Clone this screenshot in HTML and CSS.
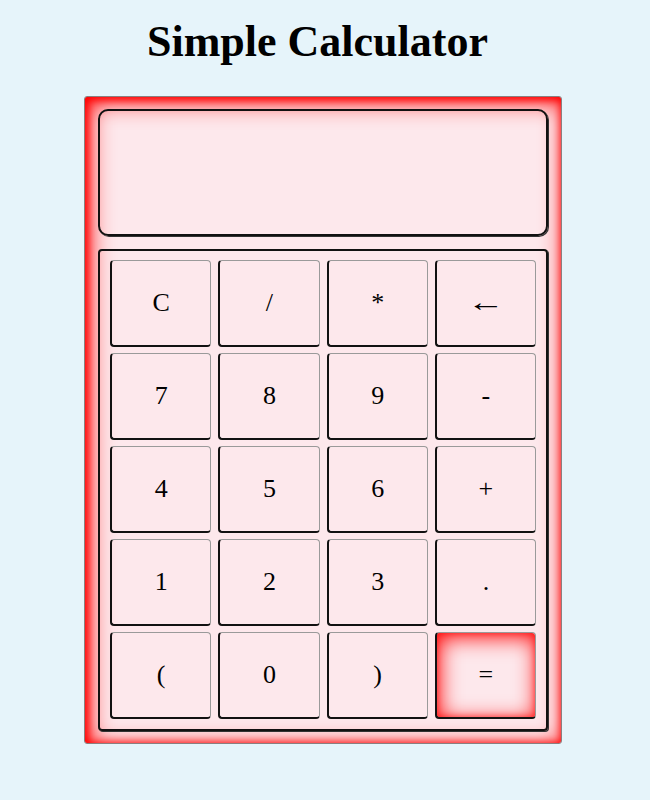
FILE: index.html
```html
<!DOCTYPE html>
<html>
<head>
<meta charset="utf-8">
<title>Simple Calculator</title>
<link rel="stylesheet" href="styles.css">
</head>
<body>
<h1 class="title">Simple Calculator</h1>
<div class="calculator">
  <div class="display"></div>
  <div class="keypad">
    <button class="key">C</button>
    <button class="key">/</button>
    <button class="key">*</button>
    <button class="key"><span class="arrow">&larr;</span></button>
    <button class="key">7</button>
    <button class="key">8</button>
    <button class="key">9</button>
    <button class="key">-</button>
    <button class="key">4</button>
    <button class="key">5</button>
    <button class="key">6</button>
    <button class="key">+</button>
    <button class="key">1</button>
    <button class="key">2</button>
    <button class="key">3</button>
    <button class="key">.</button>
    <button class="key">(</button>
    <button class="key">0</button>
    <button class="key">)</button>
    <button class="key key-equals">=</button>
  </div>
</div>
</body>
</html>
```
FILE: styles.css
```css
html, body {
  background: #e6f4fa;
}
body {
  margin: 8px;
  font-family: "Liberation Serif", "Times New Roman", serif;
  color: #000;
}
.title {
  font-size: 44px;
  font-weight: bold;
  text-align: center;
  margin: 9px 0 29px;
  padding-right: 15px;
  line-height: 50px;
}
.calculator {
  box-sizing: border-box;
  width: 478px;
  height: 648px;
  margin: 0 0 0 76px;
  padding: 12px 13px 12px 13px;
  background: #fde8ec;
  border: 1px solid #8a7f80;
  border-radius: 3px;
  box-shadow: inset 4px 4px 24px #ff0000, inset 2px 2px 8px #ff0000, inset 0 0 8px rgba(255, 0, 0, 0.4);
  display: flex;
  flex-direction: column;
  gap: 13px;
}
.display {
  box-sizing: border-box;
  height: 127px;
  border: 2px solid #111;
  border-radius: 10px;
  box-shadow: 1px 1px 0 #333;
}
.keypad {
  box-sizing: border-box;
  height: 482px;
  border: 2px solid #111;
  border-radius: 4px;
  box-shadow: 1px 1px 0 #333;
  padding: 9px 10px 10px;
  display: grid;
  grid-template-columns: repeat(4, 1fr);
  grid-template-rows: repeat(5, 87px);
  column-gap: 7px;
  row-gap: 6px;
}
.key {
  box-sizing: border-box;
  margin: 0;
  background: transparent;
  font-family: "Liberation Serif", "Times New Roman", serif;
  font-size: 26px;
  color: #000;
  border-top: 1px solid #9a9a9a;
  border-right: 1px solid #9a9a9a;
  border-left: 2px solid #111;
  border-bottom: 2px solid #111;
  border-radius: 4px;
  padding: 0;
}
.arrow {
  display: inline-block;
  transform: scaleX(1.45);
}
.key-equals {
  box-shadow: inset 2px 4px 22px #ff0000, inset 0 0 6px rgba(255, 0, 0, 0.6);
}
```
